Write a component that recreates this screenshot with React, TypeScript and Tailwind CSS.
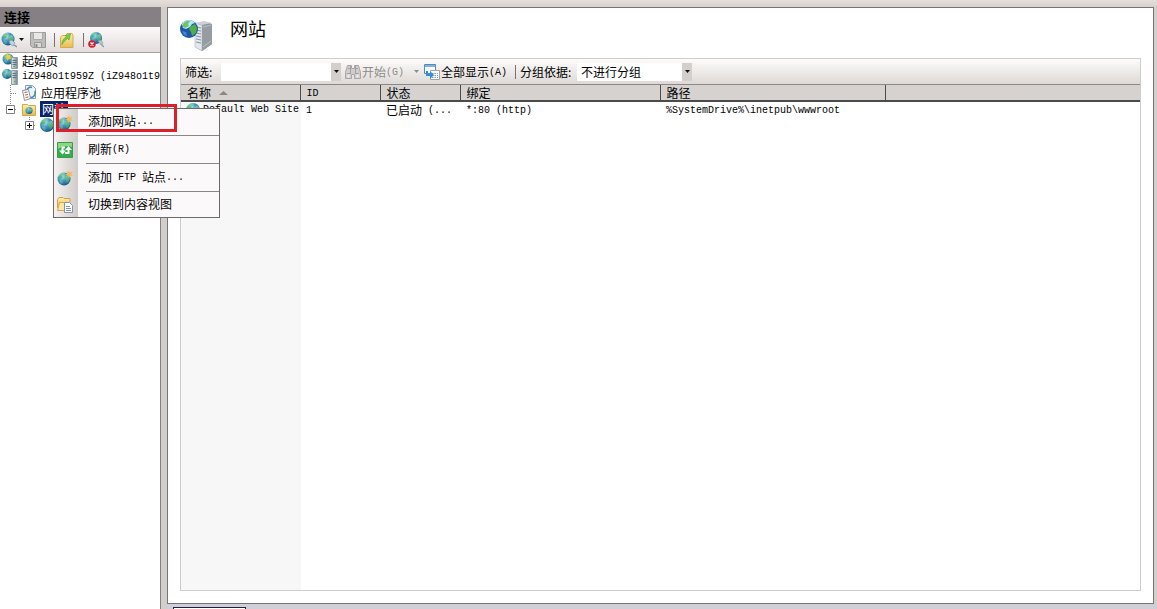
import { useState } from 'react';
import type { ReactNode } from 'react';

const columns = [
  { key: 'id', label: 'ID', latin: true, width: 'w-20' },
  { key: 'status', label: '状态', latin: false, width: 'w-20' },
  { key: 'binding', label: '绑定', latin: false, width: 'w-[200px]' },
  { key: 'path', label: '路径', latin: false, width: 'w-[225px]' },
];

// Latin text is set smaller so that it takes half the width of a Chinese character
function Latin({ children }: { children: ReactNode }) {
  return (
    <span className="align-[2px] font-['Liberation_Mono',monospace] text-[10px] leading-none whitespace-pre">
      {children}
    </span>
  );
}

function Gradients() {
  return (
    <svg width="0" height="0" className="absolute" aria-hidden="true">
      <defs>
        <radialGradient id="sphere" cx="0.35" cy="0.3" r="0.75">
          <stop offset="0" stopColor="#c4edf7" />
          <stop offset="0.45" stopColor="#469ac6" />
          <stop offset="1" stopColor="#17508c" />
        </radialGradient>
        <linearGradient id="land" x1="0" y1="0" x2="0" y2="1">
          <stop offset="0" stopColor="#8fdc94" />
          <stop offset="1" stopColor="#35a067" />
        </linearGradient>
        <linearGradient id="folder" x1="0" y1="0" x2="0" y2="1">
          <stop offset="0" stopColor="#fdf0a8" />
          <stop offset="1" stopColor="#e8bd53" />
        </linearGradient>
        <linearGradient id="metal" x1="0" y1="0" x2="1" y2="0">
          <stop offset="0" stopColor="#e8ecef" />
          <stop offset="1" stopColor="#77818a" />
        </linearGradient>
      </defs>
    </svg>
  );
}

function Globe({ cx = 8, cy = 8, r = 7 }: { cx?: number; cy?: number; r?: number }) {
  return (
    <g transform={`translate(${cx} ${cy}) scale(${r / 7})`}>
      <circle r="7" fill="url(#sphere)" />
      <path d="M-5.5-3.5C-4-6-1-6.8 1-6.2L.2-4.6-1.6-3.8-1.2-2-3.4-.6-5.6-.8-6.6-1.2Z" fill="url(#land)" opacity="0.8" />
      <path d="M1.4-2.6 4-4.6 5.8-3 6.4 0 4.6 3.4 2.6 4.6 1.8 1.4.4.2Z" fill="url(#land)" opacity="0.8" />
      <path d="M-4.8 1.4-2 2-1 4-2.4 5.8-4.4 4.6Z" fill="url(#land)" opacity="0.6" />
    </g>
  );
}

function Icon({ children }: { children: ReactNode }) {
  return (
    <svg width="16" height="16" viewBox="0 0 16 16" className="shrink-0" aria-hidden="true">
      {children}
    </svg>
  );
}

function GlobeIcon() {
  return <Icon><Globe /></Icon>;
}

function ConnectIcon() {
  return (
    <Icon>
      <Globe cx={7} cy={7} r={6.5} />
      <path d="m8 9 3-1 3 3-2 3-3-2Z" fill="#c1d3dc" stroke="#7e97a6" strokeWidth="0.7" />
      <path d="m13 13 3 2" stroke="#7c9aa6" strokeWidth="1.5" />
    </Icon>
  );
}

function SaveIcon() {
  return (
    <Icon>
      <path d="M.5.5h15v15H2.5l-2-2Z" fill="#bfbcbc" stroke="#9c9999" />
      <path d="M3.5.5h9v7h-9Z" fill="#e9e6e5" stroke="#aaa7a7" />
      <path d="M4.5 10.5h7v5h-7Z" fill="#dddada" stroke="#9c9999" />
      <path d="M5.5 12h2v3h-2Z" fill="#8d8a8a" />
    </Icon>
  );
}

function FolderUpIcon() {
  return (
    <Icon>
      <path d="M1.5 5.5 3 3.5h4l1-2h5l1 2v12H1.5Z" fill="url(#folder)" stroke="#d3ab50" />
      <path d="M3 12.5C3 9 4.5 6.5 7.5 4.8L6 3.5 11.5 2 10 8 8.5 6.5C6.5 8 5 9.5 3 12.5Z" fill="#7ccd43" stroke="#4f9f32" strokeWidth="0.6" />
    </Icon>
  );
}

function DisconnectIcon() {
  return (
    <Icon>
      <Globe cx={8} cy={6} r={6} />
      <path d="m10 9 3-1 2 3-2 2Z" fill="#bac6ce" stroke="#7e97a6" strokeWidth="0.6" />
      <path d="m13 12 3 3" stroke="#86a4ae" strokeWidth="1.5" />
      <circle cx="4" cy="12" r="3.8" fill="#cc1f2f" />
      <path d="m2.5 10.5 3 3m0-3-3 3" stroke="#fff" strokeWidth="1.3" />
    </Icon>
  );
}

function StartIcon() {
  return (
    <Icon>
      <Globe cx={6} cy={6} r={5.5} />
      <path d="m5 0 1.5 2L9 1.5 8 4l2 2-3-.5L5.5 8 5 5 2.5 4l2-1.500Z" fill="#f5cb3a" />
      <path d="M9.5 4.500h6v11h-6Z" fill="url(#metal)" stroke="#8fa0ab" />
      <path d="M10.5 7.500h4m-4 2h4m-4 2h4" stroke="#5f7482" />
      <path d="M11 13h2v1h-2Z" fill="#5cb748" />
    </Icon>
  );
}

function ServerIcon() {
  return (
    <Icon>
      <Globe cx={5} cy={5} r={5} />
      <path d="M9.500 1.500h6v14h-6Z" fill="url(#metal)" stroke="#8fa0ab" />
      <path d="M10.500 4.500h4m-4 2h4m-4 2h4" stroke="#5f7482" />
      <path d="M12 12h2v1h-2Z" fill="#5cb748" />
    </Icon>
  );
}

function PoolIcon() {
  return (
    <Icon>
      <path d="M4.5.5h7l3 3v10h-10Z" fill="#eef4fa" stroke="#8ba0b5" />
      <path d="M6 9C4 5 8 1 11 2.500M14 6c1 4-2 7-5 6.500" fill="none" stroke="#3a8fb0" strokeWidth="1.6" />
      <path d="m1.500 5.500 6-1 2 9-6 2Z" fill="#fff" stroke="#8393a1" />
      <path d="m3.500 7.500 3-.5m-2.500 3 3-.5m-2.500 3 3-.5" stroke="#c9534c" />
    </Icon>
  );
}

function SitesIcon() {
  return (
    <Icon>
      <path d="M1.500 3.500h5l1 1h7v10h-13Z" fill="url(#folder)" stroke="#d1a64e" />
      <Globe cx={8} cy={9.500} r={3.500} />
    </Icon>
  );
}

function AddSiteIcon() {
  return (
    <Icon>
      <Globe cx={7} cy={9} r={6.500} />
      <path d="m12 0 .8 2.500L16 1.500 14.200 4 16 6l-2.800-.3L12 8l-1-2.500L8 5l2.300-1.500L9.500 1l2 1Z" fill="#f3b95c" />
    </Icon>
  );
}

function RefreshIcon() {
  return (
    <Icon>
      <path d="M.5.5h15v15H.5Z" fill="#2fae4a" stroke="#3c9a50" />
      <path d="M1 1h14v4C10 3 6 4 1 7Z" fill="#8ad884" />
      <path d="M8 5.500H5.500V9M8 11h3.500V7.500" fill="none" stroke="#fff" strokeWidth="2" />
      <path d="M2 8.500h7L5.500 12.500ZM8 8h7l-3.500-4Z" fill="#fff" />
    </Icon>
  );
}

function ContentViewIcon() {
  return (
    <Icon>
      <path d="M.5 2.500 2 .5h4l1 1h6v9H.5Z" fill="url(#folder)" stroke="#cfa04b" />
      <path d="M2.500 5.500h8l-1.500 8H.5Z" fill="#fbe6a3" stroke="#d3a855" />
      <path d="M7.500 5.500h5l3 3v7h-8Z" fill="#fff" stroke="#8294ad" />
      <path d="M9 9.500h4m-4 2h5m-5 2h5" stroke="#7898c4" />
    </Icon>
  );
}

function BinocularsIcon() {
  return (
    <Icon>
      <path d="M2.500 1.500h4v3h3v-3h4l2 7v6h-6v-4h-3v4h-6v-6Z" fill="#d0cdcd" stroke="#a8a5a5" />
      <path d="M3 4.500h3m4 0h3M2 9.500h4m4 0h4M5.500 1v8m5-8v8" stroke="#a3a0a0" />
      <path d="M2.500 10.500h2v3h-2Zm9 0h2v3h-2Z" fill="#efecec" />
    </Icon>
  );
}

function ShowAllIcon() {
  return (
    <Icon>
      <path d="M.5.5h11v9H.5Z" fill="#f7fbff" stroke="#5889bd" />
      <path d="M1 1h10v2H1Z" fill="#83b1de" />
      <path d="M6.500 6.500h9v9h-9Z" fill="#fff" stroke="#9aa6b4" />
      <path d="M8 9.500h6m-6 2h6m-6 2h6" stroke="#8695a8" strokeDasharray="1.500 1" />
      <path d="M2 7v5h4v3l4-4-4-4v3H4V7Z" fill="#2e8fda" />
    </Icon>
  );
}

function SitesLogo() {
  return (
    <svg width="34" height="34" viewBox="0 0 34 34" className="shrink-0" aria-hidden="true">
      <path d="m16 6 10-2 6 2v20l-10 7-6-4Z" fill="#858b90" />
      <path d="m22 7 10-1v20l-10 7Z" fill="#969ca1" />
      <path d="m15 5 7 2v26l-7-4Z" fill="#e1e7ec" stroke="#a3abb2" strokeWidth="0.5" />
      <path d="m15 5 9-2 8 2-10 2Z" fill="#c9d0d6" />
      <path d="m16 9 5 1m-5 2 5 1m-5 2 5 1m-5 2 5 1m-5 2 5 1m-5 2 5 1" stroke="#8896a2" />
      <path d="m23 9 8-2m-8 22 8-6" stroke="#b9bfc4" />
      <circle cx="9" cy="11" r="9" fill="#1f57a8" />
      <path d="M2 6C5 1 12 1 15 5l-3 1-2 3-4 2-3-1Z" fill="#b8e8f4" />
      <path d="M3 6C5 3 8 2 10 3L8 6l1 2-4 2-2-1Z" fill="#6cc464" />
      <path d="m11 8 4-2 2 4-1 5-4 3-1-4-2-3Z" fill="#4fb04a" />
      <path d="m2 13 4 1 1 4-3-1Z" fill="#3f88cf" />
    </svg>
  );
}

function Arrow({ color = '#111' }: { color?: string }) {
  return (
    <svg width="5" height="3" viewBox="0 0 5 3" className="shrink-0" aria-hidden="true">
      <path d="M0 0h5L2.500 3Z" fill={color} />
    </svg>
  );
}

function Separator() {
  return <span className="mr-1 ml-2 h-3.5 w-px shrink-0 bg-[#77716f]" />;
}

function Sidebar() {
  return (
    <aside className="flex w-[161px] shrink-0 flex-col overflow-hidden border-r border-[#858082] bg-white">
      <h2 className="h-5 bg-[#868084] pl-1 text-[13px] leading-5 font-bold">连接</h2>
      <div className="flex h-[26px] items-center border-b border-[#a5a1a0] bg-linear-to-b from-[#fcfafa] to-[#e2dcda]">
        <button className="flex items-center gap-0.5 pl-px" aria-label="连接">
          <ConnectIcon />
          <Arrow />
        </button>
        <button className="ml-1.5" aria-label="保存"><SaveIcon /></button>
        <Separator />
        <button aria-label="向上"><FolderUpIcon /></button>
        <Separator />
        <button aria-label="断开"><DisconnectIcon /></button>
      </div>
      <ul className="whitespace-nowrap">
        <li className="flex h-4 items-center gap-1 pl-0.5"><StartIcon />起始页</li>
        <li className="flex h-4 items-center gap-1 pl-0.5"><ServerIcon /><Latin>iZ948o1t959Z (iZ948o1t9</Latin></li>
        <li className="flex h-4 items-center gap-1">
          <svg width="17" height="16" className="shrink-0" aria-hidden="true">
            <path d="M10.500 0v16M11 8.500h6" stroke="#8a8a8a" strokeDasharray="1 1" />
          </svg>
          <PoolIcon />
          应用程序池
        </li>
        <li className="flex h-4 items-center gap-1">
          <svg width="17" height="16" className="shrink-0" aria-hidden="true">
            <path d="M10.500 0v4M15 8.500h2" stroke="#8a8a8a" strokeDasharray="1 1" />
            <path d="M6.500 4.500h8v8h-8Z" fill="#fff" stroke="#808080" />
            <path d="M8 8.500h5" stroke="#000" />
          </svg>
          <SitesIcon />
          <span className="-ml-px bg-[#0a246a] px-0.5 leading-4 text-white">网站</span>
        </li>
        <li className="flex h-4 items-center gap-1">
          <svg width="35" height="16" className="shrink-0" aria-hidden="true">
            <path d="M29.500 0v4M34 8.500h3" stroke="#8a8a8a" strokeDasharray="1 1" />
            <path d="M25.500 4.500h8v8h-8Z" fill="#fff" stroke="#808080" />
            <path d="M27 8.500h5M29.500 6v5" stroke="#000" />
          </svg>
          <GlobeIcon />
        </li>
      </ul>
    </aside>
  );
}

function Toolbar() {
  const [filter, setFilter] = useState('');

  return (
    <div className="flex h-[26px] items-center border-b border-[#8d8885] bg-linear-to-b from-[#fdfcfb] to-[#ded9d6] pl-1 whitespace-nowrap">
      <label htmlFor="filter" className="w-9">筛选:</label>
      <input
        id="filter"
        className="h-[18px] w-[110px] bg-white px-1 outline-none"
        value={filter}
        onChange={(e) => setFilter(e.target.value)}
      />
      <button className="flex h-[18px] w-2.5 items-center justify-center bg-[#d3cfcd]" aria-label="筛选记录">
        <Arrow />
      </button>
      <button className="ml-1 flex items-center text-[#8f8b8a]">
        <BinocularsIcon />
        <span className="ml-px">开始<Latin>(G)</Latin></span>
        <span className="ml-2.5"><Arrow color="#8f8b8a" /></span>
      </button>
      <button className="ml-[5px] flex items-center gap-px">
        <ShowAllIcon />
        <span>全部显示<Latin>(A)</Latin></span>
      </button>
      <Separator />
      <label htmlFor="group" className="w-[57px]">分组依据:</label>
      <div className="relative flex h-[18px] w-[115px] items-center">
        <select id="group" className="h-[18px] w-full appearance-none bg-white pl-1 outline-none">
          <option>不进行分组</option>
        </select>
        <span className="pointer-events-none absolute right-0 flex h-[18px] w-2.5 items-center justify-center bg-[#d3cfcd]">
          <Arrow />
        </span>
      </div>
    </div>
  );
}

function SiteList() {
  return (
    <div className="flex flex-1 flex-col bg-linear-to-r from-[#f7f7f7] from-[120px] to-white to-[120px]">
      <table className="w-full table-fixed border-collapse text-left whitespace-nowrap">
        <thead>
          <tr className="h-4 border-b-2 border-[#4c4a4a] bg-[#d5d2d0]">
            <th className="w-[119px] border-r border-[#4c4a4a] p-0 pl-1.5 leading-[14px] font-normal">
              <span className="flex items-center gap-2">
                名称
                <svg width="9" height="4" aria-hidden="true"><path d="M0 4h9L4.500 0Z" fill="#8b8785" /></svg>
              </span>
            </th>
            {columns.map((column) => (
              <th key={column.key} className={`${column.width} border-r border-[#4c4a4a] p-0 pl-1.5 leading-[14px] font-normal`}>
                {column.latin ? <Latin>{column.label}</Latin> : column.label}
              </th>
            ))}
            <th className="p-0" aria-label="其他" />
          </tr>
        </thead>
        <tbody>
          <tr className="h-4 leading-4">
            <td className="p-0 pl-1">
              <span className="flex h-4 items-center gap-0.5">
                <GlobeIcon />
                <Latin>Default Web Site</Latin>
              </span>
            </td>
            <td className="p-0 pl-1.5"><Latin>1</Latin></td>
            <td className="p-0 pl-1.5">已启动<Latin> (...</Latin></td>
            <td className="p-0 pl-1.5"><Latin>*:80 (http)</Latin></td>
            <td className="p-0 pl-1.5"><Latin>%SystemDrive%\inetpub\wwwroot</Latin></td>
            <td className="p-0" />
          </tr>
        </tbody>
      </table>
    </div>
  );
}

function MenuItem({ icon, children }: { icon: ReactNode; children: ReactNode }) {
  return (
    <li className="group flex">
      <button className="flex w-full items-stretch text-left" role="menuitem">
        <span className="flex w-6 items-center bg-linear-to-r from-[#f5f2f1] to-[#cfcbc9] pl-[3px]">{icon}</span>
        <span className="ml-2 flex h-7 flex-1 items-center border-b border-[#8b8687] pb-0.5 pl-0.5 group-first:h-[27px] group-last:h-[25px] group-last:border-b-0">
          <span>{children}</span>
        </span>
      </button>
    </li>
  );
}

function ContextMenu() {
  return (
    <ul role="menu" className="absolute top-[108px] left-[53px] w-[167px] border border-[#6d696a] bg-[#fcf9fa]">
      <MenuItem icon={<AddSiteIcon />}>添加网站<Latin>...</Latin></MenuItem>
      <MenuItem icon={<RefreshIcon />}>刷新<Latin>(R)</Latin></MenuItem>
      <MenuItem icon={<AddSiteIcon />}>添加<Latin> FTP </Latin>站点<Latin>...</Latin></MenuItem>
      <MenuItem icon={<ContentViewIcon />}>切换到内容视图</MenuItem>
    </ul>
  );
}

function App() {
  return (
    <div className="relative flex h-screen flex-col overflow-hidden bg-[#d1cecc] font-['Noto_Sans_CJK_SC',sans-serif] text-xs text-black">
      <Gradients />
      <div className="h-[7px] shrink-0 bg-linear-to-b from-[#e5dfdb] to-[#d8d1ce]" />
      <div className="flex min-h-0 flex-1">
        <Sidebar />
        <div className="ml-1.5 flex min-w-0 flex-1 flex-col">
          <main className="mr-[3px] flex flex-1 flex-col border border-[#787476] bg-white px-3 pb-3">
            <header className="flex h-[50px] items-start pt-2.5">
              <SitesLogo />
              <h1 className="ml-4 text-lg leading-5">网站</h1>
            </header>
            <section className="flex flex-1 flex-col border border-[#cfcccc]">
              <Toolbar />
              <SiteList />
            </section>
          </main>
          <div className="flex h-[5px] shrink-0 items-end bg-[#d0ced6] pl-1.5">
            <div className="h-0.5 w-[73px] border border-b-0 border-[#20203a] bg-white" />
          </div>
        </div>
      </div>
      <ContextMenu />
      <div className="pointer-events-none absolute top-[104px] left-14 h-7 w-[121px] border-3 border-[#dc1f29]" />
    </div>
  );
}

export default App;
